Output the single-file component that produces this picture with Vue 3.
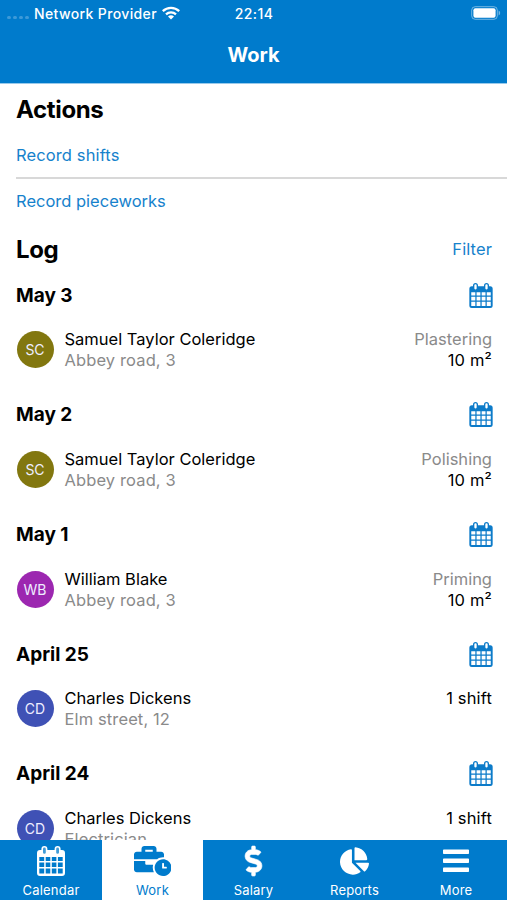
<script setup>
const days = [
  { date: 'May 3', initials: 'SC', tone: 'olive', name: 'Samuel Taylor Coleridge', place: 'Abbey road, 3', kind: 'Plastering', amount: '10 m²' },
  { date: 'May 2', initials: 'SC', tone: 'olive', name: 'Samuel Taylor Coleridge', place: 'Abbey road, 3', kind: 'Polishing', amount: '10 m²' },
  { date: 'May 1', initials: 'WB', tone: 'purple', name: 'William Blake', place: 'Abbey road, 3', kind: 'Priming', amount: '10 m²' },
  { date: 'April 25', initials: 'CD', tone: 'indigo', name: 'Charles Dickens', place: 'Elm street, 12', kind: '', amount: '1 shift' },
  { date: 'April 24', initials: 'CD', tone: 'indigo', name: 'Charles Dickens', place: 'Electrician', kind: '', amount: '1 shift' },
]
const tabs = ['Calendar', 'Work', 'Salary', 'Reports', 'More']
</script>

<template>
  <div class="screen">
    <svg class="defs" aria-hidden="true">
      <symbol id="calendar" viewBox="0 0 28 30">
        <path fill="currentColor" fill-rule="evenodd" d="M3 4H25Q28 4 28 7V27Q28 30 25 30H3Q0 30 0 27V7Q0 4 3 4ZM2.3 11V15.1H7.2V11ZM8.7 11V15.1H13.3V11ZM14.8 11V15.1H19.4V11ZM20.9 11V15.1H25.7V11ZM2.3 16.6V21.1H7.2V16.6ZM8.7 16.6V21.1H13.3V16.6ZM14.8 16.6V21.1H19.4V16.6ZM20.9 16.6V21.1H25.7V16.6ZM2.3 22.6V27.5H7.2V22.6ZM8.7 22.6V27.5H13.3V22.6ZM14.8 22.6V27.5H19.4V22.6ZM20.9 22.6V27.5H25.7V22.6Z" />
        <rect class="ring" x="5.2" y=".8" width="4.4" height="7.8" rx="2.2" stroke="currentColor" stroke-width="1.6" />
        <rect class="ring" x="18.4" y=".8" width="4.4" height="7.8" rx="2.2" stroke="currentColor" stroke-width="1.6" />
      </symbol>
    </svg>

    <header class="top">
      <div class="status">
        <div class="carrier">
          <span class="signal"><i v-for="n in 4" :key="n"></i></span>
          <span class="provider">Network Provider</span>
          <svg class="wifi" viewBox="0 0 18 14">
            <g fill="none" stroke="currentColor" stroke-width="2.3">
              <path d="M.8 5.1C5.4.7 12.6.7 17.2 5.1" />
              <path d="M4 8.4C6.8 5.8 11.2 5.8 14 8.4" />
            </g>
            <path d="M6 10.4Q9 8 12 10.4L9 13.5Z" fill="currentColor" />
          </svg>
        </div>
        <span class="clock">22:14</span>
        <svg class="battery" viewBox="0 0 30 14">
          <rect x=".7" y=".7" width="25.6" height="12.6" rx="3.5" fill="none" stroke="#fff" stroke-opacity=".45" />
          <rect x="2.4" y="2.3" width="22.2" height="9.4" rx="2" fill="#fff" />
          <path d="M27.6 4.6Q29.2 5.3 29.2 7T27.6 9.4Z" fill="#fff" fill-opacity=".45" />
        </svg>
      </div>
      <h1>Work</h1>
    </header>

    <main>
      <h2 class="actions-title">Actions</h2>
      <a class="action divided">Record shifts</a>
      <a class="action">Record pieceworks</a>
      <div class="log-head">
        <h2>Log</h2>
        <a class="filter">Filter</a>
      </div>
      <section v-for="day in days" :key="day.date" class="day">
        <div class="day-head">
          <h3>{{ day.date }}</h3>
          <svg class="day-icon"><use href="#calendar" /></svg>
        </div>
        <div class="entry">
          <span class="avatar" :class="day.tone">{{ day.initials }}</span>
          <div class="person">
            <span>{{ day.name }}</span>
            <span class="muted place">{{ day.place }}</span>
          </div>
          <div class="result">
            <span v-if="day.kind" class="muted">{{ day.kind }}</span>
            <span class="amount">{{ day.amount }}</span>
          </div>
        </div>
      </section>
    </main>

    <nav>
      <a v-for="tab in tabs" :key="tab" class="tab" :class="{ active: tab === 'Work' }">
        <svg v-if="tab === 'Calendar'" class="i-calendar"><use href="#calendar" /></svg>
        <svg v-else-if="tab === 'Work'" class="i-work" viewBox="0 0 640 512"><path fill="currentColor" d="M496 224c-79.59 0-144 64.41-144 144s64.41 144 144 144 144-64.41 144-144-64.41-144-144-144zm64 150.29c0 5.34-4.37 9.71-9.71 9.71h-60.57c-5.34 0-9.71-4.37-9.71-9.71v-76.57c0-5.34 4.37-9.71 9.71-9.71h12.57c5.34 0 9.71 4.37 9.71 9.71V352h38.29c5.34 0 9.71 4.37 9.71 9.71v12.58zM496 192c5.4 0 10.72.33 16 .81V144c0-25.6-22.4-48-48-48h-80V48c0-25.6-22.4-48-48-48H176c-25.6 0-48 22.4-48 48v48H48c-25.6 0-48 22.4-48 48v80h395.12c28.6-20.09 63.35-32 100.88-32zM320 96H192V64h128v32zm6.82 224H208c-8.84 0-16-7.16-16-16v-48H0v144c0 25.6 22.4 48 48 48h291.43C327.1 423.96 320 396.82 320 368c0-16.66 2.48-32.72 6.82-48z" /></svg>
        <svg v-else-if="tab === 'Salary'" class="i-salary" viewBox="0 0 288 512"><path fill="currentColor" stroke="currentColor" stroke-width="10" d="M209.2 233.4l-108-31.6C88.7 198.2 80 186.5 80 173.5c0-16.3 13.2-29.5 29.5-29.5h66.3c12.2 0 24.2 3.7 34.2 10.5 6.1 4.1 14.3 3.1 19.5-2l34.8-34c7.1-6.9 6.1-18.4-1.8-24.5C238 74.8 207.4 64.1 176 64V16c0-8.8-7.2-16-16-16h-32c-8.8 0-16 7.2-16 16v48h-2.5C45.8 64-5.4 118.7.5 183.6c4.2 46.1 39.4 83.6 83.8 96.6l102.5 30c12.5 3.7 21.2 15.3 21.2 28.3 0 16.3-13.2 29.5-29.5 29.5h-66.3C100 368 88 364.3 78 357.5c-6.1-4.1-14.3-3.1-19.5 2l-34.8 34c-7.1 6.9-6.1 18.4 1.8 24.5 24.5 19.2 55.1 29.9 86.5 30v48c0 8.8 7.2 16 16 16h32c8.8 0 16-7.2 16-16v-48.2c46.6-.9 90.3-28.6 105.7-72.7 21.5-61.6-14.6-124.8-72.5-141.7z" /></svg>
        <svg v-else-if="tab === 'Reports'" class="i-reports" viewBox="0 0 544 512"><path fill="currentColor" d="M527.79 288H290.5l158.03 158.03c6.04 6.04 15.98 6.53 22.19.68 38.7-36.46 65.32-85.61 73.13-140.86 1.34-9.46-6.51-17.85-16.06-17.85zm-15.83-64.8C503.72 103.74 408.26 8.28 288.8.04 279.68-.59 272 7.1 272 16.24V240h223.77c9.14 0 16.82-7.68 16.19-16.8zM224 288V50.71c0-9.55-8.39-17.4-17.84-16.06C86.99 51.49-4.1 155.6.14 280.37 4.5 408.51 114.83 513.59 243.03 511.98c50.4-.63 96.97-16.87 135.26-44.03 7.9-5.6 8.42-17.23 1.57-24.08L224 288z" /></svg>
        <svg v-else class="i-more" viewBox="0 0 26 30"><path fill="currentColor" d="M.8 3.5h24.4q.8 0 .8.8v2.9q0 .8-.8.8H.8Q0 8 0 7.2V4.3q0-.8.8-.8zM.8 12.5h24.4q.8 0 .8.8v2.9q0 .8-.8.8H.8q-.8 0-.8-.8v-2.9q0-.8.8-.8zM.8 21.6h24.4q.8 0 .8.8v2.9q0 .8-.8.8H.8q-.8 0-.8-.8v-2.9q0-.8.8-.8z" /></svg>
        <span>{{ tab }}</span>
      </a>
    </nav>
  </div>
</template>

<style>
body { margin: 0; overflow: hidden; }
</style>

<style scoped>
.screen { width: 507px; height: 900px; display: flex; flex-direction: column; overflow: hidden; background: #fff; color: #000; font-family: Inter, "Liberation Sans", sans-serif; font-size: 16.5px; line-height: 21px; }
.defs { width: 0; height: 0; flex: none; display: block; }
h1, h2, h3 { margin: 0; font-weight: 700; }
span, a, h1, h2, h3 { white-space: nowrap; }
.top { flex: none; height: 83px; background: #007bcc; border-bottom: 1px solid #99caeb; color: #fff; }
.status { height: 26px; display: grid; grid-template-columns: 1fr auto 1fr; align-items: center; padding: 0 6px 0 7px; font-size: 14px; font-weight: 500; }
.carrier { display: flex; align-items: center; }
.signal { display: flex; gap: 2px; width: 27px; padding-top: 8px; }
.signal i { width: 4px; height: 3px; border-radius: 2px; background: #3d9ad8; }
.provider { letter-spacing: .37px; }
.wifi { width: 18px; height: 14px; margin-left: 5px; }
.clock { letter-spacing: .4px; }
.battery { width: 30px; height: 14px; justify-self: end; }
h1 { text-align: center; font-size: 20px; line-height: 28px; padding-top: 15px; }
main { flex: 1; min-height: 0; overflow: hidden; padding-left: 16px; }
h2 { font-size: 24px; line-height: 32px; letter-spacing: -.35px; }
.actions-title { padding-top: 10px; }
.action { display: block; color: #1682cc; height: 46px; padding-top: 12px; box-sizing: border-box; }
.action.divided { height: 53px; padding-top: 19px; border-bottom: 2px solid #d8d8d8; letter-spacing: .12px; }
.log-head { display: flex; justify-content: space-between; align-items: center; height: 48px; padding-right: 15px; }
.log-head h2 { padding-top: 1px; }
.filter { color: #1682cc; letter-spacing: .1px; }
.day { height: 119.7px; padding-right: 15px; }
.day-head { display: flex; justify-content: space-between; align-items: center; height: 44px; }
h3 { font-size: 19px; line-height: 24px; padding-top: 1px; }
.day-icon { width: 24px; height: 25px; margin-right: -1px; color: #0c7bc9; --ring: #fff; }
.ring { fill: var(--ring); }
.entry { display: flex; padding-top: 12.3px; }
.avatar { width: 37px; height: 37px; margin: 2px 11px 0 .5px; border-radius: 50%; display: flex; align-items: center; justify-content: center; font-size: 14px; color: #eef; }
.olive { background: #82770f; }
.purple { background: #9c27b0; }
.indigo { background: #3f51b5; }
.person, .result { display: flex; flex-direction: column; }
.result { margin-left: auto; align-items: flex-end; }
.amount { letter-spacing: .15px; }
.muted { color: #8a8a8a; }
.place { letter-spacing: .12px; }
nav { flex: none; height: 60px; display: grid; grid-template-columns: 102px 101px 101px 101px 102px; background: #007bcc; }
.tab { display: flex; flex-direction: column; align-items: center; padding-top: 6px; color: #fff; font-size: 13px; line-height: 18px; }
.tab span { margin-top: 5px; letter-spacing: .2px; }
.tab.active { background: #fff; color: #007bcc; }
.tab svg { height: 30px; flex: none; }
.i-calendar { width: 28px; --ring: #409cd8; }
.i-work { width: 37.5px; }
.tab .i-salary { width: 17px; overflow: visible; }
.i-reports { width: 29px; }
.i-more { width: 26px; }
</style>
